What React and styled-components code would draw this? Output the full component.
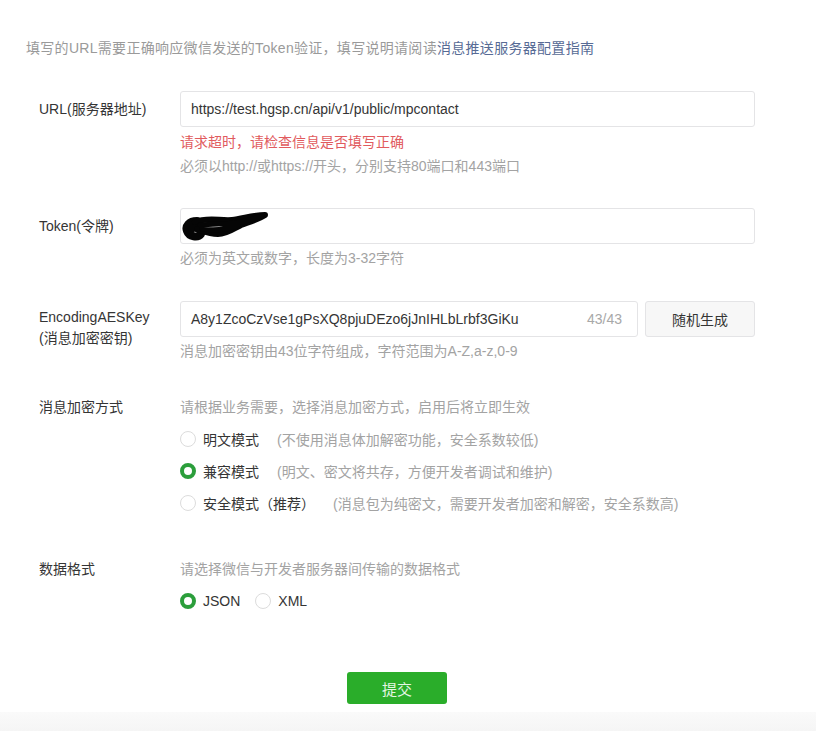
import React, { useState } from 'react';
import styled, { createGlobalStyle } from 'styled-components';

//Global
const GlobalStyle = createGlobalStyle`
	html, body {
		margin: 0;
		padding: 0;
		background: #ffffff;
	}
	body {
		font-family: "Liberation Sans", "Noto Sans CJK SC", sans-serif;
		color: #353535;
		font-size: 14px;
	}
	* {
		box-sizing: border-box;
	}
`;

//Styled
const Page = styled.div`
	width: 816px;
	min-height: 731px;
	display: flex;
	flex-direction: column;
	padding-top: 36px;
`;

const Note = styled.p`
	margin: 0 0 31px 26px;
	font-size: 14px;
	line-height: 24px;
	letter-spacing: 0.3px;
	color: #9a9a9a;

	a {
		color: #576b95;
		text-decoration: none;
	}
`;

const Form = styled.form`
	width: 716px;
	margin-left: 39px;
	display: flex;
	flex-direction: column;
`;

const Row = styled.div`
	display: grid;
	grid-template-columns: 141px 575px;
	margin-bottom: ${(p) => p.$gap || 0}px;
`;

const Label = styled.label`
	font-size: 14px;
	line-height: ${(p) => p.$lh || 36}px;
	padding-top: ${(p) => p.$pt || 0}px;
	color: #353535;
`;

const Control = styled.div`
	display: flex;
	flex-direction: column;
`;

const Input = styled.input`
	width: 100%;
	height: 36px;
	border: 1px solid #e4e4e6;
	border-radius: 3px;
	padding: 0 10px;
	font: inherit;
	font-size: 14px;
	color: #353535;
	outline: none;
	background: #fff;
`;

const FakeInput = styled.div`
	position: relative;
	width: 100%;
	height: 36px;
	border: 1px solid #e4e4e6;
	border-radius: 3px;
	background: #fff;
`;

const Scribble = styled.svg`
	position: absolute;
	left: 1px;
	top: 2px;
`;

const KeyLine = styled.div`
	display: flex;
	gap: 7px;
`;

const KeyBox = styled.div`
	width: 458px;
	height: 36px;
	display: flex;
	align-items: center;
	border: 1px solid #e4e4e6;
	border-radius: 3px;
	padding: 0 15px 0 10px;
`;

const KeyText = styled.span`
	flex: 1;
	font-size: 14px;
	color: #353535;
`;

const Counter = styled.span`
	font-size: 14px;
	color: #a8a8a8;
`;

const GhostButton = styled.button`
	width: 110px;
	height: 36px;
	border: 1px solid #e4e4e6;
	border-radius: 3px;
	background: #f7f7f7;
	font: inherit;
	font-size: 14px;
	color: #353535;
	cursor: pointer;
`;

const Tip = styled.div`
	font-size: 14px;
	line-height: 24px;
	color: ${(p) => (p.$error ? '#e15b5e' : '#a3a3a3')};
	margin-top: ${(p) => p.$mt || 0}px;
`;

const RadioList = styled.div`
	display: flex;
	flex-direction: ${(p) => (p.$inline ? 'row' : 'column')};
	gap: ${(p) => (p.$inline ? '15px' : '0')};
	margin-top: 4px;
`;

const Option = styled.label`
	display: flex;
	align-items: center;
	height: 32px;
	cursor: pointer;
	font-size: 14px;
	color: #353535;
`;

const Dot = styled.span`
	width: 16px;
	height: 16px;
	border-radius: 50%;
	margin-right: 7px;
	border: ${(p) => (p.$on ? '4px solid #2b9e3b' : '1px solid #dcdcdc')};
	background: #fff;
	flex-shrink: 0;
`;

const Desc = styled.span`
	margin-left: 18px;
	color: #a3a3a3;
`;

const Actions = styled.div`
	display: flex;
	justify-content: center;
	margin-top: 55px;
	margin-bottom: 8px;
`;

const Submit = styled.button`
	width: 100px;
	height: 32px;
	border: none;
	border-radius: 3px;
	background: #2aad2a;
	color: #e3f6e3;
	font: inherit;
	font-size: 15px;
	cursor: pointer;
`;

const Footer = styled.div`
	flex: 1;
	min-height: 18px;
	background: linear-gradient(#fafafa, #f5f5f5);
`;

const encryptModes = [
	{ key: 'plain', name: '明文模式', desc: '(不使用消息体加解密功能，安全系数较低)' },
	{ key: 'compat', name: '兼容模式', desc: '(明文、密文将共存，方便开发者调试和维护)' },
	{ key: 'safe', name: '安全模式（推荐）', desc: '(消息包为纯密文，需要开发者加密和解密，安全系数高)' },
];

//Main component content
const App = () => {
	const [mode, setMode] = useState('compat');
	const [format, setFormat] = useState('json');

	//Component render
	return (
		<Page>
			<GlobalStyle />
			<Note>
				填写的URL需要正确响应微信发送的Token验证，填写说明请阅读<a href="#">消息推送服务器配置指南</a>
			</Note>
			<Form onSubmit={(e) => e.preventDefault()}>
				<Row $gap={30}>
					<Label>URL(服务器地址)</Label>
					<Control>
						<Input defaultValue="https://test.hgsp.cn/api/v1/public/mpcontact" />
						<Tip $error $mt={3}>请求超时，请检查信息是否填写正确</Tip>
						<Tip>必须以http://或https://开头，分别支持80端口和443端口</Tip>
					</Control>
				</Row>
				<Row $gap={31}>
					<Label>Token(令牌)</Label>
					<Control>
						<FakeInput>
							<Scribble width="88" height="30" viewBox="0 0 88 30">
								<path
									d="M15 10 C7 10 3 15 5 20 C7 26 16 27 19 23 C21 20 16 16 11 17"
									fill="none"
									stroke="#050505"
									strokeWidth="8"
									strokeLinecap="round"
									strokeLinejoin="round"
								/>
								<path
									d="M13 11 C25 6 38 10 50 9 C60 8 72 4 83 4 C77 8 67 11 59 14 C51 18 45 23 36 23 C27 23 21 20 15 18"
									fill="none"
									stroke="#050505"
									strokeWidth="6"
									strokeLinecap="round"
									strokeLinejoin="round"
								/>
								<path
									d="M18 14 C32 12 46 14 60 11 C68 9 74 7 80 5 M20 18 C34 20 46 18 56 15"
									fill="none"
									stroke="#050505"
									strokeWidth="5"
									strokeLinecap="round"
								/>
							</Scribble>
						</FakeInput>
						<Tip $mt={2}>必须为英文或数字，长度为3-32字符</Tip>
					</Control>
				</Row>
				<Row $gap={32}>
					<Label $lh={21} $pt={6}>
						EncodingAESKey
						<br />
						(消息加密密钥)
					</Label>
					<Control>
						<KeyLine>
							<KeyBox>
								<KeyText>A8y1ZcoCzVse1gPsXQ8pjuDEzo6jJnIHLbLrbf3GiKu</KeyText>
								<Counter>43/43</Counter>
							</KeyBox>
							<GhostButton type="button">随机生成</GhostButton>
						</KeyLine>
						<Tip $mt={2}>消息加密密钥由43位字符组成，字符范围为A-Z,a-z,0-9</Tip>
					</Control>
				</Row>
				<Row $gap={38}>
					<Label $lh={24}>消息加密方式</Label>
					<Control>
						<Tip>请根据业务需要，选择消息加密方式，启用后将立即生效</Tip>
						<RadioList>
							{encryptModes.map((m) => (
								<Option key={m.key} onClick={() => setMode(m.key)}>
									<Dot $on={mode === m.key} />
									{m.name}
									<Desc>{m.desc}</Desc>
								</Option>
							))}
						</RadioList>
					</Control>
				</Row>
				<Row>
					<Label $lh={24}>数据格式</Label>
					<Control>
						<Tip>请选择微信与开发者服务器间传输的数据格式</Tip>
						<RadioList $inline>
							<Option onClick={() => setFormat('json')}>
								<Dot $on={format === 'json'} />
								JSON
							</Option>
							<Option onClick={() => setFormat('xml')}>
								<Dot $on={format === 'xml'} />
								XML
							</Option>
						</RadioList>
					</Control>
				</Row>
				<Actions>
					<Submit type="submit">提交</Submit>
				</Actions>
			</Form>
			<Footer />
		</Page>
	);
};

export default App;
